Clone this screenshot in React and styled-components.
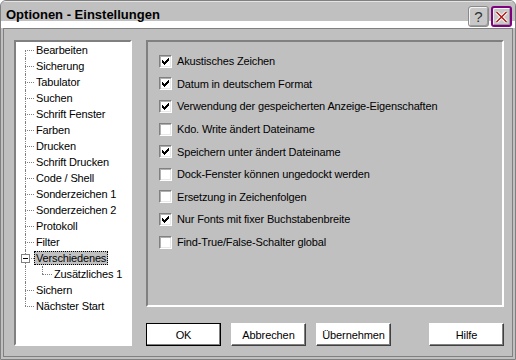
import React from 'react'
import styled, { createGlobalStyle, css } from 'styled-components'

const GlobalStyle = createGlobalStyle`
    html, body {
        margin: 0;
        padding: 0;
        background: #ffffff;
    }
    * {
        box-sizing: border-box;
    }
`

/* Window frame */

const Window = styled.div`
    width: 516px;
    height: 360px;
    display: flex;
    flex-direction: column;
    background: #c0c0c0;
    border: 1px solid #808080;
    border-radius: 6px 6px 0 0;
    font-family: 'Liberation Sans', Arial, sans-serif;
    font-size: 11px;
    color: #000;
    overflow: hidden;
`

const Header = styled.div`
    height: 27px;
    flex: none;
    display: flex;
    align-items: flex-start;
    padding: 0 3px 0 5px;
    background: linear-gradient(#c0c0c0 0 19px, #ffffff 19px);
    border-top: 1px solid #e4e4e4;
`

const Title = styled.div`
    flex: 1;
    padding-top: 3px;
    line-height: 20px;
    font-size: 13px;
    font-weight: bold;
    white-space: nowrap;
`

const CaptionButton = styled.div`
    width: 21px;
    height: 21px;
    margin-top: 4px;
    margin-left: 2px;
    display: flex;
    align-items: center;
    justify-content: center;
    background: #c8c8c8;
    border: ${({ $close }) => ($close ? '2px solid #800080' : '1px solid #8a8a8a')};
    border-radius: 3px;
    box-shadow: inset 1px 1px #f4f4f4, inset -1px -1px #9a9a9a;
    font-size: 15px;
    color: #303030;
    line-height: 1;
`

const Body = styled.div`
    flex: 1;
    margin: 0 2px 2px 2px;
    border: 1px solid #808080;
    padding: 11px 8px 10px 10px;
    display: grid;
    grid-template-columns: 118px 1fr;
    column-gap: 14px;
`

/* Tree */

const Tree = styled.div`
    background: #ffffff;
    border: 2px solid;
    border-color: #808080 #ffffff #ffffff #808080;
    display: flex;
    flex-direction: column;
`

const dotted = '1px dotted #808080'

const TreeRow = styled.div`
    position: relative;
    height: 16px;
    flex: none;
    display: flex;
    align-items: center;
    padding-left: ${({ $level }) => ($level ? 36 : 18)}px;

    &::before {
        content: '';
        position: absolute;
        left: ${({ $level }) => ($level ? 26 : 9)}px;
        width: ${({ $level }) => ($level ? 10 : 9)}px;
        top: 8px;
        border-top: ${dotted};
    }

    &::after {
        content: '';
        position: absolute;
        left: 9px;
        top: ${({ $first }) => ($first ? 8 : 0)}px;
        bottom: ${({ $last }) => ($last ? 8 : 0)}px;
        border-left: ${dotted};
    }
`

const ChildStem = styled.span`
    position: absolute;
    left: 26px;
    top: 0;
    height: 8px;
    border-left: ${dotted};
`

const Label = styled.span`
    padding: 0 1px;
    line-height: 12px;
    border: 1px dotted transparent;
    white-space: nowrap;
    letter-spacing: -0.15px;
    ${({ $selected }) =>
        $selected &&
        css`
            background: #c0c0c0;
            border-color: #000;
        `}
`

const Expander = styled.span`
    position: absolute;
    left: 5px;
    top: 4px;
    width: 9px;
    height: 9px;
    background: #fff;
    border: 1px solid #808080;
    z-index: 1;

    &::before {
        content: '';
        position: absolute;
        left: 1px;
        top: 3px;
        width: 5px;
        height: 1px;
        background: #000;
    }
`

/* Right side */

const RightColumn = styled.div`
    display: flex;
    flex-direction: column;
    gap: 16px;
`

const Group = styled.div`
    flex: 1;
    border: 2px solid;
    border-color: #808080 #ffffff #ffffff #808080;
    padding: 8px 0 0 11px;
    display: flex;
    flex-direction: column;
`

const OptionRow = styled.label`
    height: 22.6px;
    flex: none;
    display: flex;
    align-items: center;
    gap: 5px;
    white-space: nowrap;
    letter-spacing: -0.15px;
`

const Box = styled.span`
    width: 13px;
    height: 13px;
    flex: none;
    position: relative;
    background: #ffffff;
    border: 1px solid;
    border-color: #808080 #ffffff #ffffff #808080;
    box-shadow: inset 1px 1px #b0b0b0, inset -1px -1px #e8e8e8;

    svg {
        position: absolute;
        left: 2px;
        top: 2px;
    }
`

const ButtonRow = styled.div`
    height: 23px;
    flex: none;
    display: flex;
    gap: 10px;
`

const Button = styled.div`
    width: 75px;
    height: 23px;
    display: flex;
    align-items: center;
    justify-content: center;
    background: #ffffff;
    border: 1px solid;
    border-color: ${({ $default }) =>
        $default ? '#000 #000 #000 #000' : '#ffffff #404040 #404040 #ffffff'};
    box-shadow: inset -1px -1px #808080;
    margin-left: ${({ $push }) => ($push ? 'auto' : '0')};
    letter-spacing: -0.1px;
`

const CheckMark = () => (
    <svg width="7" height="7" viewBox="0 0 7 7" shapeRendering="crispEdges">
        <path
            fill="#000"
            d="M6 0h1v1h-1z M5 1h2v1h-2z M0 2h1v1h-1z M4 2h3v1h-3z M0 3h2v1h-2z M3 3h3v1h-3z M0 4h5v1h-5z M1 5h3v1h-3z M2 6h1v1h-1z"
        />
    </svg>
)

const CloseGlyph = () => (
    <svg width="13" height="12" viewBox="0 0 13 12">
        <path d="M1.5 1 L11.5 11 M11.5 1 L1.5 11" stroke="#ffffff" strokeWidth="3.2" />
        <path d="M1.5 1 L11.5 11 M11.5 1 L1.5 11" stroke="#b01818" strokeWidth="1.5" />
    </svg>
)

const treeItems = [
    'Bearbeiten',
    'Sicherung',
    'Tabulator',
    'Suchen',
    'Schrift Fenster',
    'Farben',
    'Drucken',
    'Schrift Drucken',
    'Code / Shell',
    'Sonderzeichen 1',
    'Sonderzeichen 2',
    'Protokoll',
    'Filter',
    { label: 'Verschiedenes', selected: true, expanded: true },
    { label: 'Zusätzliches 1', level: 1 },
    'Sichern',
    'Nächster Start',
]

const options = [
    ['Akustisches Zeichen', true],
    ['Datum in deutschem Format', true],
    ['Verwendung der gespeicherten Anzeige-Eigenschaften', true],
    ['Kdo. Write ändert Dateiname', false],
    ['Speichern unter ändert Dateiname', true],
    ['Dock-Fenster können ungedockt werden', false],
    ['Ersetzung in Zeichenfolgen', false],
    ['Nur Fonts mit fixer Buchstabenbreite', true],
    ['Find-True/False-Schalter global', false],
]

export default function App() {
    return (
        <>
            <GlobalStyle />
            <Window>
                <Header>
                    <Title>Optionen - Einstellungen</Title>
                    <CaptionButton>?</CaptionButton>
                    <CaptionButton $close>
                        <CloseGlyph />
                    </CaptionButton>
                </Header>
                <Body>
                    <Tree>
                        {treeItems.map((item, i) => {
                            const it = typeof item === 'string' ? { label: item } : item
                            return (
                                <TreeRow
                                    key={it.label}
                                    $level={it.level}
                                    $first={i === 0}
                                    $last={i === treeItems.length - 1}
                                >
                                    {it.expanded && <Expander />}
                                    {it.level && <ChildStem />}
                                    <Label $selected={it.selected}>{it.label}</Label>
                                </TreeRow>
                            )
                        })}
                    </Tree>
                    <RightColumn>
                        <Group>
                            {options.map(([text, checked]) => (
                                <OptionRow key={text}>
                                    <Box>{checked && <CheckMark />}</Box>
                                    {text}
                                </OptionRow>
                            ))}
                        </Group>
                        <ButtonRow>
                            <Button $default>OK</Button>
                            <Button>Abbrechen</Button>
                            <Button>Übernehmen</Button>
                            <Button $push>Hilfe</Button>
                        </ButtonRow>
                    </RightColumn>
                </Body>
            </Window>
        </>
    )
}
